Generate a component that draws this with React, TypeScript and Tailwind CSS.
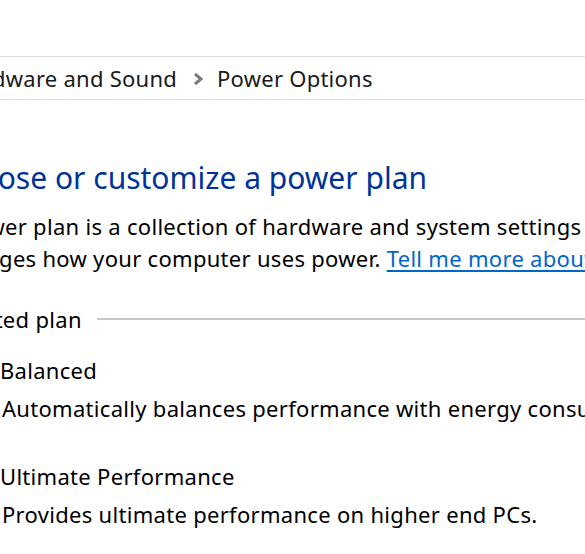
import React from "react";

function Chevron() {
  return (
    <svg width="10" height="12" viewBox="0 0 10 12" className="ml-[16px] mr-[14px] shrink-0">
      <path d="M2 1 L8 6 L2 11" fill="none" stroke="#7a7a7a" strokeWidth="3" />
    </svg>
  );
}

export default function App() {
  return (
    <div
      className="w-[585px] h-[554px] overflow-hidden bg-white text-black"
      style={{ fontFamily: '"Noto Sans", "Open Sans", sans-serif' }}
    >
      <div className="h-[56px]" />
      <div className="h-[44px] pt-[1px] border-y border-[#dcdcdc] flex items-center whitespace-nowrap text-[22px] tracking-[0.25px] text-[#1a1a1a]">
        <div className="flex items-center -ml-[46px]">
          <span>Hardware and Sound</span>
          <Chevron />
          <span>Power Options</span>
        </div>
      </div>

      <div className="mt-[55px] h-[44px] flex items-center whitespace-nowrap text-[30px] text-[#003399]">
        <span className="-ml-[58px]">Choose or customize a power plan</span>
      </div>

      <div className="mt-[11px] text-[22px] tracking-[0.3px] leading-[32px] whitespace-nowrap">
        <div className="-ml-[60px]">
          A power plan is a collection of hardware and system settings (like display brightness, sleep, etc.)
        </div>
        <div className="-ml-[61px]">
          manages how your computer uses power.{" "}
          <a className="text-[#0066cc] underline underline-offset-[3px]">Tell me more about power plans</a>
        </div>
      </div>

      <div className="mt-[29px] h-[32px] flex items-center whitespace-nowrap text-[22px] tracking-[0.3px]">
        <span className="-ml-[60px]">Selected plan</span>
        <div className="ml-[15px] flex-1 h-[2px] bg-[#c8c8c8]" />
      </div>

      <div className="mt-[16px] text-[22px] tracking-[0.3px] whitespace-nowrap">
        <div className="leading-[38px]">Balanced</div>
        <div className="leading-[38px] ml-[2px]">
          Automatically balances performance with energy consumption on capable hardware.
        </div>
        <div className="mt-[30px] leading-[38px]">Ultimate Performance</div>
        <div className="leading-[38px] ml-[2px]">Provides ultimate performance on higher end PCs.</div>
      </div>
    </div>
  );
}
